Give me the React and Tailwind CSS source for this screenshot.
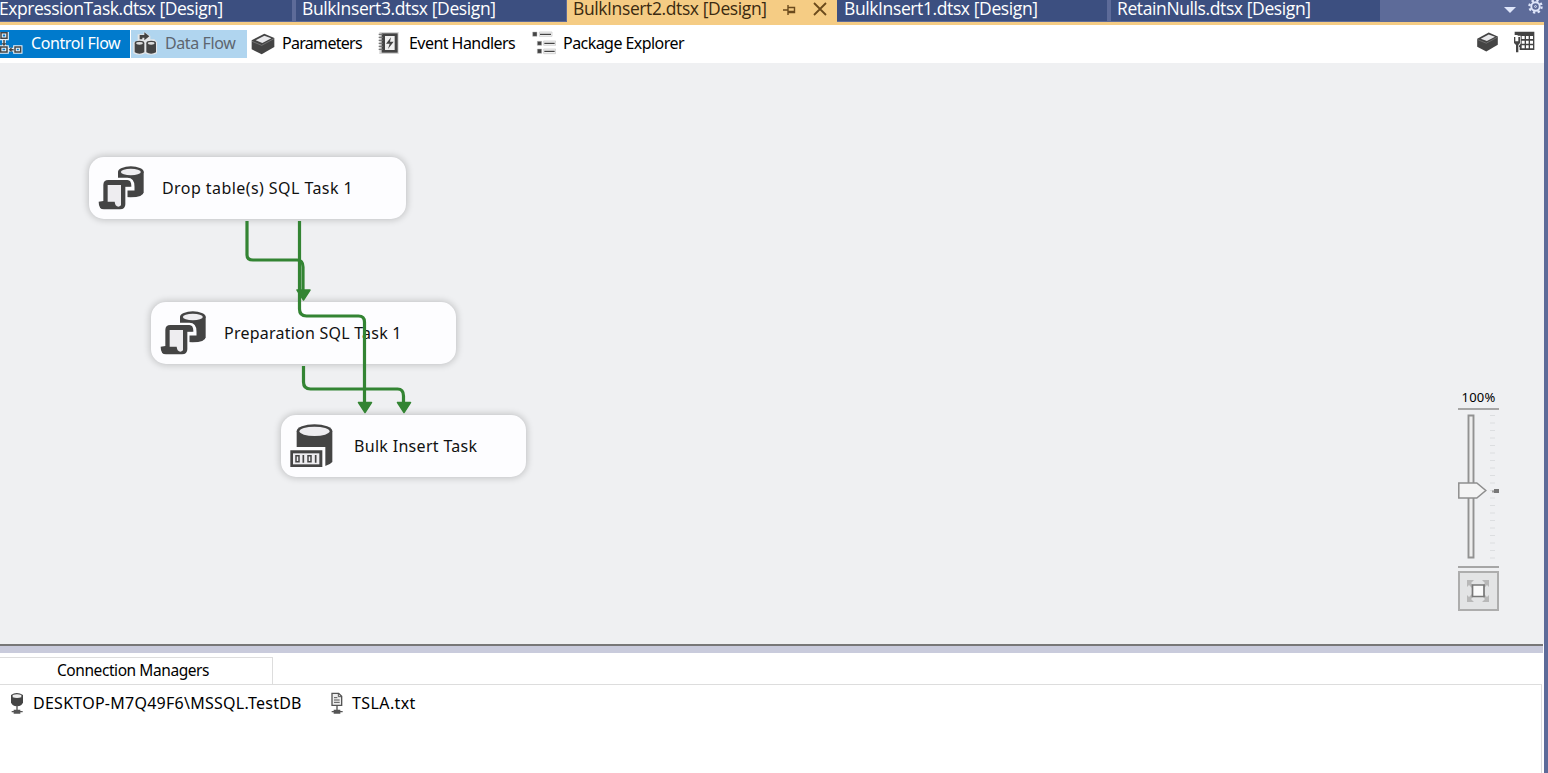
const tahoma = "font-['Noto_Sans',sans-serif]";

function SqlTaskIcon() {
  return (
    <svg className="size-[47px] shrink-0" viewBox="0 0 141 141">
      <path d="M60 20v62q0 15 38 15t39-15V20z" fill="#444" />
      <ellipse cx="98.500" cy="20" rx="38.500" ry="16" fill="#444" />
      <ellipse cx="98.500" cy="21" rx="30" ry="10" fill="#eeedf0" />
      <path d="M16 108V60q0-15 15-15h57q15 0 15 20v5H82v48q0 15-16 15H18Q2 133 2 108z" fill="#444" stroke="#fdfdff" strokeWidth="13" />
      <path d="M16 108V60q0-15 15-15h57q12 0 12 18v2H82v53q0 15-16 15H18Q2 133 2 110z" fill="#444" />
      <path d="M29 60h40v61q-8 8-16 0-2-5-3-11H29z" fill="#eeedf0" />
    </svg>
  );
}

function BulkIcon() {
  return (
    <svg className="size-[47px] shrink-0" viewBox="0 0 141 141">
      <path d="M20 24v95q14 13 54 13t53-15V24z" fill="#444" />
      <ellipse cx="73.500" cy="24" rx="53.500" ry="20" fill="#444" />
      <ellipse cx="73.500" cy="25" rx="45" ry="14" fill="#eeedf0" />
      <path d="M-4 72h110v66H-4z" fill="#fdfdff" />
      <path d="M1 82h96v50H1z" fill="#444" />
      <path d="M9 91h79v33H9z" fill="#eeedf0" />
      <path d="M18 98h9v18h-9zM54 98h9v18h-9z" fill="none" stroke="#444" strokeWidth="4.500" />
      <path d="M40 96v23M77 96v23" stroke="#444" strokeWidth="5" />
    </svg>
  );
}

function BoxIcon({ className }) {
  return (
    <svg className={className} viewBox="0 0 72 66">
      <path d="M2 22 40 2l30 13v27L32 64 2 49z" fill="#444" />
      <path d="M14 22 40 8l21 8-27 14z" fill="#e8e8ea" />
      <path d="M3 25l29 12 37-20" fill="none" stroke="#888" strokeWidth="2" />
    </svg>
  );
}

function ControlFlowIcon() {
  return (
    <svg className="h-[24px] w-[23px] shrink-0" viewBox="0 0 69 72">
      <path d="M3 2h18v17H3zM2 45h19v15H2zM45 45h17v15H45zM12 19v26M21 53h24" fill="none" stroke="#e9f1f7" strokeWidth="11" />
      <path d="M3 2h18v17H3zM2 45h19v15H2zM45 45h17v15H45zM12 24v12M33 53h8" fill="none" stroke="#444" strokeWidth="4.500" />
      <path d="M26 53l9-8v16zM12 42l-8-8h16z" fill="#444" />
    </svg>
  );
}

function DataFlowIcon() {
  return (
    <svg className="-mt-[2px] h-[24px] w-[25px] shrink-0" viewBox="0 0 75 72">
      <path d="M14 30V10h18V2l20 13v10h12l8 8v34q-18 9-36 0-16 9-35 0V34z" fill="#e4e6e8" />
      <path d="M5 37v27q14 8 29 0V37zM40 37v27q14 8 29 0V37z" fill="#444" />
      <ellipse cx="19.500" cy="36" rx="14.500" ry="7" fill="#444" />
      <ellipse cx="54.500" cy="36" rx="14.500" ry="7" fill="#444" />
      <ellipse cx="19.500" cy="37" rx="10" ry="4" fill="#ddd" />
      <ellipse cx="54.500" cy="37" rx="10" ry="4" fill="#ddd" />
      <path d="M20 25V12h14V4l15 12-15 12v-8h-6v5z" fill="#444" />
    </svg>
  );
}

function EventIcon() {
  return (
    <svg className="-mt-[2px] h-[24px] w-[22px] shrink-0" viewBox="0 0 66 72">
      <path d="M4 3h58v66H4z" fill="#d4d4d4" />
      <path d="M11 7h48v58H11z" fill="#444" />
      <path d="M21 15h29v42H21z" fill="#f0f0f0" />
      <path d="M2 10h12M2 19h12M2 28h12M2 37h12M2 46h12M2 55h12" stroke="#777" strokeWidth="4" />
      <path d="M39 19 24 38h11l-5 16 17-22H36z" fill="#444" />
    </svg>
  );
}

function ExplorerIcon() {
  return (
    <svg className="-mt-[2px] h-[24px] w-[24px] shrink-0" viewBox="0 0 72 72">
      <path d="M22 3h38v13H22zM35 30h36v13H35zM35 54h36v14H35z" fill="#f2f2f2" stroke="#c4c4c4" strokeWidth="2" />
      <path d="M2 3h13v13H2zM16 31h13v12H16zM16 54h13v13H16z" fill="#444" stroke="#bbb" strokeWidth="1.500" />
      <path d="M24 10h33M37 37h31M37 61h31" stroke="#444" strokeWidth="4" />
    </svg>
  );
}

function GridIcon() {
  return (
    <svg className="mt-[1px] h-[22px] w-[22px]" viewBox="0 0 66 66">
      <path d="M5 2h59v55H20V48h-6V12H5z" fill="#444" />
      <path d="M26 15h9v9h-9zM39 15h8v9h-8zM51 15h9v9h-9zM26 29h9v9h-9zM39 29h8v9h-8zM51 29h9v9h-9zM26 43h9v9h-9zM39 43h8v9h-8zM51 43h9v9h-9z" fill="#fff" />
      <path d="M0 14h23v24l-5 6v21H7V44l-7-6z" fill="#fff" />
      <path d="M3 18h4v13h9V18h5v18l-5 6v22H9V42l-6-6z" fill="#444" />
    </svg>
  );
}

function ServerIcon({ doc }) {
  return (
    <svg className="-mt-[2px] h-[22px] w-[14px] shrink-0" viewBox="0 0 42 66">
      {doc ? (
        <>
          <path d="M6 4h20l9 9v27H6z" fill="#eee" stroke="#555" strokeWidth="4" />
          <path d="M25 4v10h10M12 17h10M12 24h17M12 31h17" fill="none" stroke="#555" strokeWidth="3" />
        </>
      ) : (
        <>
          <path d="M3 9q17-12 36 0v22q-3 12-18 12T3 31z" fill="#444" />
          <path d="M8 9q13-5 26 0v7q-13 4-26 0z" fill="#eee" />
        </>
      )}
      <path d="M21 40v20M5 59h33M13 55h16v8H13z" stroke="#555" strokeWidth="4" />
    </svg>
  );
}

function Tab({ className, label, textClass }) {
  return (
    <div className={`h-[21px] shrink-0 bg-[#3c4f80] ${className}`}>
      <span className={`block whitespace-nowrap text-[17.500px] leading-[16px] text-white ${textClass}`}>{label}</span>
    </div>
  );
}

function Node({ className, icon, label, textClass }) {
  return (
    <div className={`absolute flex h-[62px] items-center rounded-[15px] bg-[#fdfdff] pl-[9px] shadow-[0_0_7px_1px_rgba(0,0,0,0.2)] ${className}`}>
      {icon}
      <span className={`ml-[17px] whitespace-nowrap text-[16px] text-[#111] ${textClass}`}>{label}</span>
    </div>
  );
}

const ticks = Array.from({ length: 20 }, (_, i) => i);

export default function App() {
  return (
    <div className={`flex h-[773px] w-[1548px] flex-col overflow-hidden bg-[#5d6b99] ${tahoma}`}>
      <header className="flex h-[22px] shrink-0 font-['Open_Sans',sans-serif]">
        <Tab className="mr-[4px] w-[292px]" label="ExpressionTask.dtsx [Design]" textClass="-ml-px tracking-[-0.45px]" />
        <Tab className="w-[270px] pl-[6px]" label="BulkInsert3.dtsx [Design]" textClass="tracking-[-0.39px]" />
        <div className="ml-px flex h-[22px] w-[270px] shrink-0 bg-[#f5cc84] pl-[6px]">
          <span className="w-[210px] whitespace-nowrap text-[17.500px] leading-[17px] tracking-[-0.39px] text-[#3b2a10]">BulkInsert2.dtsx [Design]</span>
          <svg className="mt-[4px] h-[12px] w-[13px]" viewBox="0 0 13 12" fill="none" stroke="#6b4a1c">
            <path d="M0 6h5M5 1v10M5 3.500h6.500v5H5M5 7.500h6" strokeWidth="1.400" />
          </svg>
          <svg className="ml-[17px] mt-[2px] h-[14px] w-[14px]" viewBox="0 0 14 14" stroke="#6b4a1c" strokeWidth="1.800">
            <path d="M1 1l12 12M13 1L1 13" />
          </svg>
        </div>
        <Tab className="mr-[4px] w-[270px] pl-[7px]" label="BulkInsert1.dtsx [Design]" textClass="tracking-[-0.39px]" />
        <Tab className="w-[269px] pl-[6px]" label="RetainNulls.dtsx [Design]" textClass="tracking-[-0.39px]" />
        <div className="flex flex-1 justify-end">
          <svg className="mt-[7px] h-[6px] w-[12px]" viewBox="0 0 12 6"><path d="M0 0h12L6 6z" fill="#dfe6fa" /></svg>
          <svg className="-mt-px ml-[12px] mr-[5px] h-[15px] w-[15px]" viewBox="0 0 16 16" fill="none" stroke="#dfe6fa">
            <circle cx="8" cy="8" r="4.500" strokeWidth="2" />
            <circle cx="8" cy="8" r="6.500" strokeWidth="2.400" strokeDasharray="2.500 2.605" />
            <circle cx="8" cy="8" r="1" strokeWidth="1" />
          </svg>
        </div>
      </header>
      <div className="mr-[4px] h-[3px] shrink-0 bg-[#f5cc84]" />
      <main className="mr-[4px] flex flex-1 flex-col bg-white">
        <nav className="flex h-[38px] shrink-0 pt-[5px] text-[16px] leading-[26px] text-black">
          <div className="flex h-[28px] w-[130px] items-center bg-[#007acc] text-white">
            <ControlFlowIcon />
            <span className="-mt-[2px] ml-[8px] whitespace-nowrap tracking-[-0.4px]">Control Flow</span>
          </div>
          <div className="ml-px flex h-[28px] w-[116px] items-center bg-[#b0d5ef] pl-[2px] text-[#5d6670]">
            <DataFlowIcon />
            <span className="-mt-[2px] ml-[7px] whitespace-nowrap tracking-[-0.4px]">Data Flow</span>
          </div>
          <div className="flex h-[28px] w-[131px] items-center pl-[4px]">
            <BoxIcon className="h-[22px] w-[24px] shrink-0" />
            <span className="-mt-[2px] ml-[7px] whitespace-nowrap tracking-[-0.7px]">Parameters</span>
          </div>
          <div className="flex h-[28px] w-[154px] items-center">
            <EventIcon />
            <span className="-mt-[2px] ml-[9px] whitespace-nowrap tracking-[-0.55px]">Event Handlers</span>
          </div>
          <div className="flex h-[28px] items-center">
            <ExplorerIcon />
            <span className="-mt-[2px] ml-[7px] whitespace-nowrap tracking-[-0.55px]">Package Explorer</span>
          </div>
          <div className="ml-auto flex gap-[14px] pr-[9px]">
            <BoxIcon className="mt-[2px] h-[20px] w-[23px]" />
            <GridIcon />
          </div>
        </nav>
        <section className="relative h-[581px] shrink-0 bg-[#eff0f2]">
          <Node className="left-[89px] top-[94px] w-[317px]" icon={<SqlTaskIcon />} label="Drop table(s) SQL Task 1" textClass="tracking-[0.43px]" />
          <Node className="left-[151px] top-[239px] w-[305px]" icon={<SqlTaskIcon />} label="Preparation SQL Task 1" textClass="tracking-[0.23px]" />
          <Node className="left-[281px] top-[352px] w-[245px]" icon={<BulkIcon />} label="Bulk Insert Task" textClass="tracking-[0.31px]" />
          <svg className="absolute left-0 top-0 h-[581px] w-[600px]" viewBox="0 63 600 581" fill="none" stroke="#338433" strokeWidth="3.200">
            <path d="M247 221v34q0 5 6 5h44q6 0 6 7v25" />
            <path d="M299.500 221v88q0 7 7 7h52q6 0 6 6v82" />
            <path d="M303.500 366v16q0 7 7 7h87q6 0 6 7v8" />
            <path d="M297 290h13l-6.500 10zM358.500 402.500h13l-6.500 10zM397.500 402.500h13l-6.500 10z" fill="#338433" strokeWidth="1.500" strokeLinejoin="round" />
          </svg>
          <div className="absolute left-[1458px] top-[326px] flex w-[41px] flex-col">
            <span className="h-[19px] text-center text-[13px] leading-[17px] tracking-[0.2px] text-black">100%</span>
            <svg className="h-[160px] w-[41px]" viewBox="0 0 41 160" fill="none">
              <path d="M0 1h41M0 159h41" stroke="#a6a6a6" strokeWidth="2" />
              <path d="M10.500 7.500h5v142h-5z" fill="#eee" stroke="#929292" strokeWidth="1.900" />
              {ticks.map((i) => (
                <path key={i} d={`M32 ${7.500 + i * 7.500}h5`} stroke="#dcdee0" />
              ))}
              <path d="M.8 75h18l9 7.500-9 7.500h-18z" fill="#f4f4f4" stroke="#8e8e8e" strokeWidth="1.500" />
              <path d="M34 83.500h7" stroke="#999" strokeWidth="2" />
              <path d="M36 83h5" stroke="#777" strokeWidth="4" />
            </svg>
            <div className="mt-[3px] flex h-[40px] items-center justify-center border-2 border-[#adadad] bg-[#e3e4e5]">
              <svg className="-mt-px -ml-px h-[24px] w-[24px]" viewBox="0 0 24 24" fill="none">
                <path d="M1 8V1h7L5 4l3 3-2 2-3-3zM16 1h7v7l-2-2-3 3-2-2 3-3zM1 16v7h7l-3-3 3-3-2-2-3 3zM23 16v7h-7l3-3-3-3 2-2 3 3z" fill="#b8b8b8" />
                <path d="M6.500 6h11.500v11.500H6.500z" fill="#fafafa" stroke="#777" strokeWidth="1.700" />
              </svg>
            </div>
          </div>
        </section>
        <div className="mr-px h-[9px] shrink-0 border-t-2 border-[#777] bg-[#c9cbdc]" />
        <div className="mt-[4px] h-[27px] w-[273px] shrink-0 border border-b-0 border-l-0 border-[#ddd] pl-[57px]">
          <span className="block whitespace-nowrap text-[15.500px] leading-[25px] tracking-[-0.43px]">Connection Managers</span>
        </div>
        <div className="mr-[2px] flex flex-1 border-r border-t border-[#ddd] pt-[7px]">
          <div className="flex h-[23px] items-center pl-[10px]">
            <ServerIcon />
            <span className="-mt-[2px] ml-[9px] w-[297px] whitespace-nowrap text-[16px] tracking-[0.26px]">DESKTOP-M7Q49F6\MSSQL.TestDB</span>
            <ServerIcon doc />
            <span className="-mt-[2px] ml-[8px] text-[16px] tracking-[0.4px]">TSLA.txt</span>
          </div>
        </div>
      </main>
    </div>
  );
}
